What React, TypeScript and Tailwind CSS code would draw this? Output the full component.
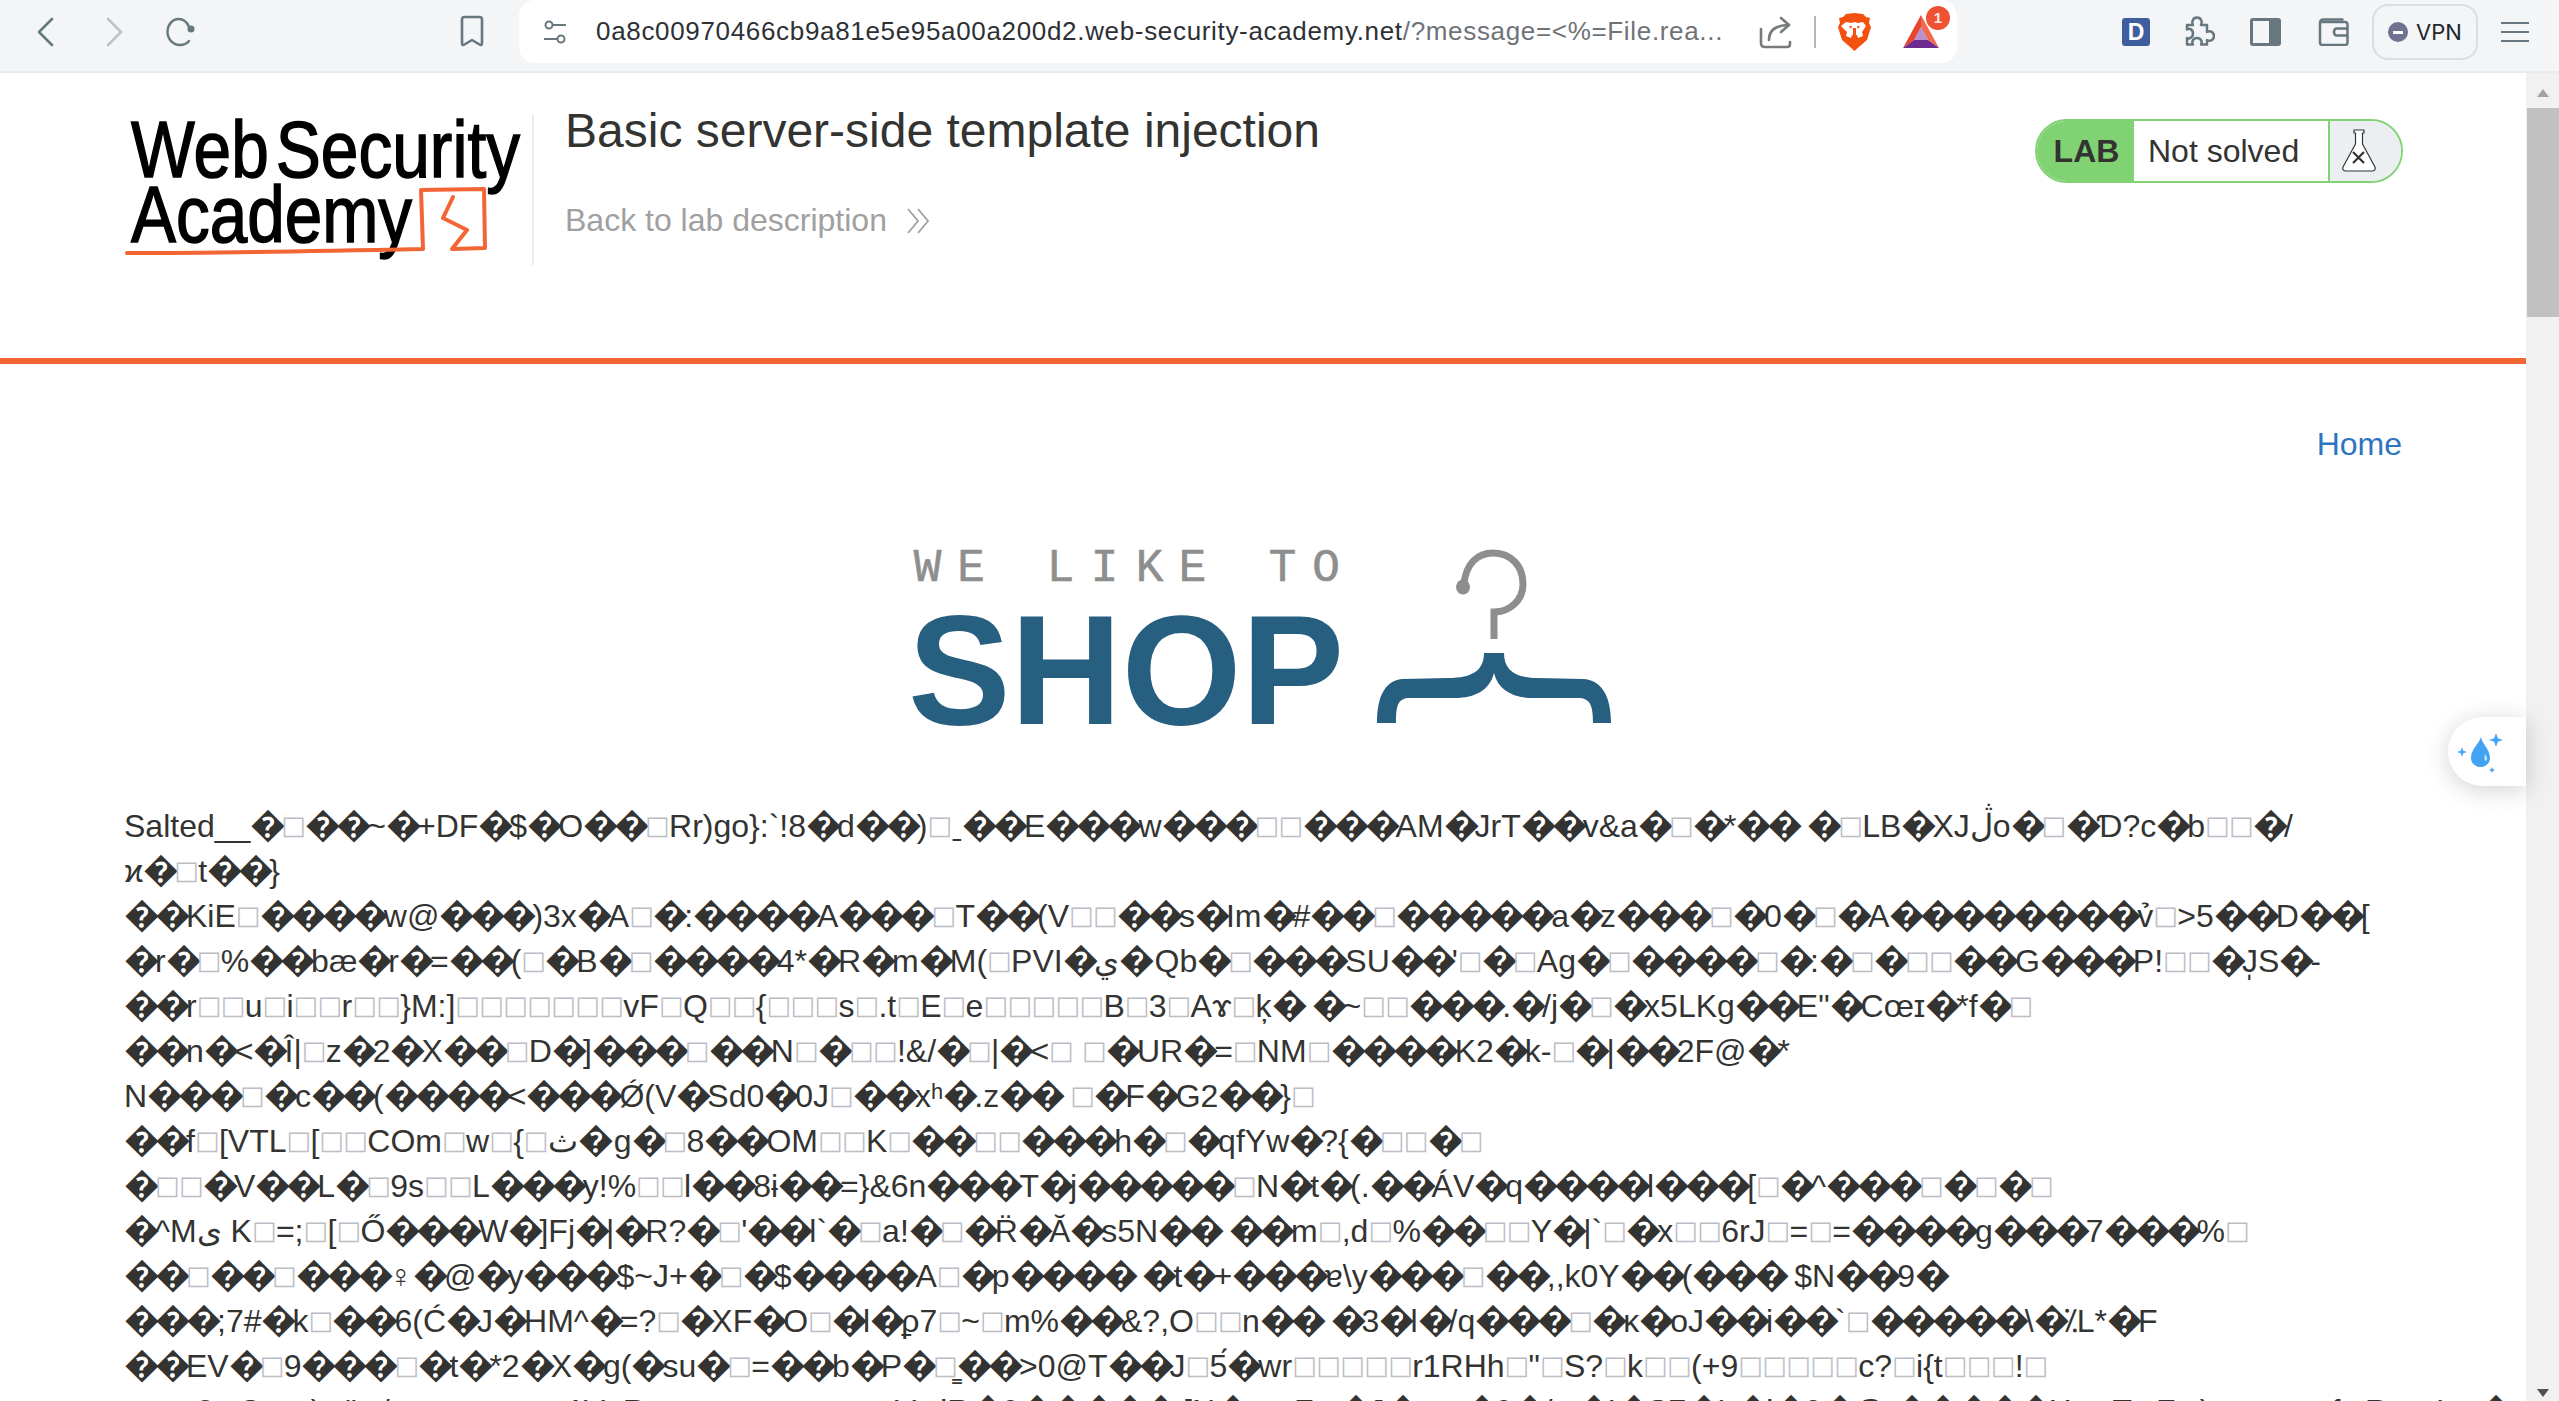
import React from 'react';

// Control bytes in the dumped file show up as pale empty boxes, replacement chars are big and tight
const DumpLine = ({ text }: { text: string }) => (
  <div className="h-[45px] whitespace-pre">
    {text.split(/(□|�+)/).map((part, i) =>
      part === '□' ? (
        <span key={i} className="inline-block w-[24px] text-center align-[3px] font-['DejaVu_Sans',sans-serif] text-[26px] leading-none text-[#bdbdc6]">
          □
        </span>
      ) : part.startsWith('�') ? (
        <span key={i} className="text-[36px] leading-none tracking-[-5px]">
          {part}
        </span>
      ) : (
        part
      ),
    )}
  </div>
);

const dumpedLines = [
  'Salted__�□��~�+DF�$�O��□Rr)go}:`!8�d��)□ˍ��E���w���□□���AM�JrT��v&a�□�*�� �□LB�XJڷo�□�Ɗ?c�b□□�/',
  'ϰ�□t��}',
  '��KiE□����w@���)3x�A□�:����A���□T��(V□□��s�Im�#��□�����a�z���□�0�□�A��������v̉□>5��D��[',
  '�r�□%��bæ�r�=��(□�B�□����4*�R�m�M(□PVI�ي�Qb�□���SU��\'□�□Ag�□����□�:�□�□□��G���P!□□�J̩S�-',
  '��r□□u□i□□r□□}M:]□□□□□□□vF□Q□□{□□□s□.t□E□e□□□□□B□3□Aɤ□ķ� �~□□���.�/j�□�x5LKg��E"�Cœɪ�*f�□',
  '��n�<�Î|□z�2�X��□D�]���□��N□�□□!&/�□|�<□ □�UR�=□NM□����K2�k-□�|��2F@�*',
  'N���□�c��(����<���Ǿ(V�Sd0�0J□��xʰ�.z�� □�F�G2��}□',
  '��f□[VTL□[□□COm□w□{□ث�g�□8��OM□□K□��□□���h�□�qfYw�?{�□□�□',
  '�□□�V��L�□9s□□L���y!%□□l��8ɨ��=}&6n���T�j�����□N�t�(.��ÁV�q����l���[□�^���□�□�□',
  '�^Mى K□=;□[□Ő���W�]Fj�|�R?�□\'��l`�□a!�□�R̈�Ă�s5N�� ��m□,d□%��□□Y�|`□�x□□6rJ□=□=����g���7���%□',
  '��□��□���♀�@�y���$~J+�□�$����A□�p���� �t�+���ɐ\\y���□��,,k0Y��(��� $N��9�',
  '���;7#�k□��6(Ć�J�HM^�=?□�XF�O□�l�ϼ7□~□m%��&?,O□□n�� �3�l�/q���□�κ�oJ��i��`□�����\\�⁒L*�F',
  '��EV�□9���□�t�*2�X�g(�su�□=��b�P�□̳��>0@T��J□5́�wr□□□□□r1RHh□"□S?□k□□(+9□□□□□c?□i{t□□□!□',
  '□□□?□O□□)□"□/□□□□□□□ AV_R□□□□□□□ □□□V□ʼR�0�����,[N�□□F□�J�□□�0�/□�!�S7�L�ʼ�0�@:�����X□_T□F□)□□□□□{□R□□L□�',
];

const iconStroke = '#66777f';

const Toolbar = () => (
  <div className="flex h-[73px] shrink-0 items-start border-b-2 border-[#e9ebee] bg-[#f3f5f7] pl-[31px]">
    <div className="flex h-[64px] items-center">
      <svg width="30" height="30" viewBox="0 0 30 30" fill="none" stroke={iconStroke} strokeWidth="2.6" strokeLinecap="round" strokeLinejoin="round">
        <path d="M21 2 8 15l13 13" />
      </svg>
      <svg className="ml-[38px]" width="30" height="30" viewBox="0 0 30 30" fill="none" stroke="#bcc5c9" strokeWidth="2.6" strokeLinecap="round" strokeLinejoin="round">
        <path d="M9 2l13 13L9 28" />
      </svg>
      <svg className="ml-[37px]" width="30" height="30" viewBox="0 0 30 30" fill="none" stroke={iconStroke} strokeWidth="2.4" strokeLinecap="round">
        <path d="M23 10C21 4 16 2 13 2 6 2 1.500 8 1.500 15 1.500 22 7 28 14 28c4 0 7-1.500 9-4" />
        <circle cx="25" cy="12" r="3.500" fill={iconStroke} stroke="none" />
      </svg>
      <svg className="ml-[261px]" width="30" height="34" viewBox="0 0 30 34" fill="none" stroke={iconStroke} strokeWidth="2.600" strokeLinejoin="round">
        <path d="M5 4.500Q5 2 7.500 2h15Q25 2 25 4.500V28q0 3-2.500 1.500L15 25l-7.500 4.500Q5 31 5 28Z" />
      </svg>
    </div>
    <div className="ml-[32px] flex h-[63px] w-[1438px] items-center rounded-[16px] bg-white pl-[24px] pr-[17px]">
      <svg width="24" height="24" viewBox="0 0 24 24" fill="none" stroke={iconStroke} strokeWidth="2">
        <circle cx="6" cy="5" r="3.500" />
        <path d="M10 5h13" />
        <circle cx="18" cy="19" r="3.500" />
        <path d="M1 19h13" />
      </svg>
      <span className="ml-[29px] font-['Liberation_Sans',sans-serif] text-[26px] tracking-[0.67px] whitespace-nowrap text-[#6e7378]">
        <span className="text-[#2d3135]">0a8c00970466cb9a81e5e95a00a200d2.web-security-academy.net</span>/?message=&lt;%=File.rea...
      </span>
      <svg className="ml-auto" width="34" height="34" viewBox="0 0 34 34" fill="none" stroke="#777b7e" strokeWidth="2.600" strokeLinecap="round" strokeLinejoin="round">
        <path d="M3 14v14q0 4 4 4h22q3 0 3-3v-2" />
        <path d="M11 25c0-9 6-15 20-15" />
        <path d="M23 3l8 7-8 7" />
      </svg>
      <div className="ml-[22px] h-[32px] w-[2px] bg-[#b5b8ba]" />
      <svg className="ml-[22px]" width="33" height="38" viewBox="0 0 33 38">
        <path fill="#f4500f" d="M16.500 0 25 1l3 3 4 1-1 5 2 4-4 13-7 6-5.500 5-5.500-5-7-6L0 14l2-4-1-5 4-1 3-3Z" />
        <path fill="#fff" d="M8 9l5 1 3.500-1L20 10l5-1 3 4-4 6 1 4-5 2-1-3h-5l-1 3-5-2 1-4-6-6Z" />
        <path fill="#f4500f" d="M11 13h3l-1 3ZM19 13h3l-2 3ZM15 15h3v8h-3ZM12 25l4.500 2 4.500-2-4.500 6Z" />
      </svg>
      <div className="relative ml-[32px]">
        <svg className="mt-[1px]" width="37" height="34" viewBox="0 0 37 34">
          <path fill="#e8452f" d="M18 0 0 33l11-8 7-13Z" />
          <path fill="#f26a4b" d="M18 0v12l7 13 11 8Z" />
          <path fill="#6d2b8f" d="M0 33h36l-11-8H11Z" />
          <path fill="#8a4aa8" d="M18 12l7 13H11Z" opacity="0.600" />
        </svg>
        <div className="absolute left-[23px] top-[-8px] flex h-[24px] w-[24px] items-center justify-center rounded-full bg-[#ef5134] font-['Liberation_Sans',sans-serif] text-[15px] font-bold text-[#ffe9e2]">
          1
        </div>
      </div>
    </div>
    <div className="flex h-[64px] items-center">
      <div className="ml-[165px] flex h-[28px] w-[28px] items-center justify-center rounded-[3px] bg-[#3f5e9e] font-['Liberation_Sans',sans-serif] text-[23px] font-bold text-white">
        D
      </div>
      <svg className="ml-[33px]" width="32" height="32" viewBox="0 0 32 32" fill="none" stroke={iconStroke} strokeWidth="2.500" strokeLinejoin="round">
        <path d="M4 9h6q-1-2-.5-4 1-3.500 4.500-3.500T18.500 5q.5 2-.5 4h6v7q2-1 4-.5 3 1 3 4.500t-3 4.500q-2 .5-4-.5v4.500H18q1-2 .5-3.500-1-3-4.500-3t-4.500 3q-.5 1.500.5 3.500H4v-6.500q2 1 3 0 3-1 3-4.500T7 13q-1-.5-3 .5Z" />
      </svg>
      <svg className="ml-[35px]" width="31" height="28" viewBox="0 0 31 28">
        <path fill={iconStroke} d="M3 0h25q3 0 3 3v22q0 3-3 3H3q-3 0-3-3V3q0-3 3-3Zm0 3v22h16V3Z" />
      </svg>
      <svg className="ml-[37px]" width="31" height="28" viewBox="0 0 31 28" fill="none" stroke={iconStroke} strokeWidth="2.500" strokeLinejoin="round">
        <path d="M2 5q0-3.500 3.500-3.500h20" />
        <path d="M2 5q0-1 2-1h23q2.500 0 2.500 2.500v18q0 2.500-2.500 2.500H4.500Q2 27 2 24.500Z" />
        <path d="M29.500 10.500H19q-3 0-3 3.500t3 3.500h10.500" />
      </svg>
      <div className="ml-[23px] flex h-[56px] w-[106px] items-center rounded-[16px] border-2 border-[#d6dfe5] pl-[14px]">
        <div className="flex h-[20px] w-[20px] items-center justify-center rounded-full bg-[#6f7290]">
          <div className="h-[3px] w-[10px] bg-white" />
        </div>
        <span className="ml-[8px] font-['Inter',sans-serif] text-[22px] text-[#20262b]">VPN</span>
      </div>
      <div className="ml-[23px] flex w-[28px] flex-col gap-[7px]">
        <div className="h-[2px] bg-[#66777f]" />
        <div className="h-[2px] bg-[#66777f]" />
        <div className="h-[2px] bg-[#66777f]" />
      </div>
    </div>
  </div>
);

const AcademyLogo = () => (
  <svg width="408" height="150" viewBox="124 115 408 150" className="shrink-0">
    <g fontFamily="'Liberation Sans',sans-serif" fill="#000" stroke="#000" strokeWidth="1.500">
      <text x="131" y="177" fontSize="80" wordSpacing="-14" textLength="389" lengthAdjust="spacingAndGlyphs">
        Web Security
      </text>
      <text x="131" y="242" fontSize="80" textLength="281" lengthAdjust="spacingAndGlyphs">
        Academy
      </text>
    </g>
    <path
      fill="none"
      stroke="#f26534"
      strokeWidth="4"
      strokeLinejoin="round"
      strokeLinecap="round"
      d="M127 253q100 0 296-4l-2-59 63-1 1 59-33 1 15-19-14-7-10-5 10-21"
    />
  </svg>
);

const LabStatus = () => (
  <div className="flex h-[64px] w-[368px] overflow-hidden rounded-[32px] border-2 border-[#80d273] font-['Liberation_Sans',sans-serif] text-[32px] text-[#333332]">
    <div className="flex w-[97px] items-center justify-center bg-[#80d273] pl-[2px] font-bold">LAB</div>
    <div className="flex w-[196px] items-center border-r-2 border-[#80d273] bg-white pl-[14px]">Not solved</div>
    <div className="flex flex-1 items-center bg-[#ebeff2] pl-[11px]">
      <svg width="36" height="44" viewBox="0 0 36 44" fill="#fff" stroke="#333332" strokeWidth="1.200" strokeLinejoin="round">
        <path d="M13 1h10v3h-1.500v11L34 38q1 4-3 4H5q-4 0-3-4L14.500 15V4H13Z" />
        <path d="M12 23l11 11M23 23 12 34" fill="none" strokeWidth="2.200" />
      </svg>
    </div>
  </div>
);

const Header = () => (
  <div className="flex h-[291px] shrink-0 border-b-[6px] border-[#f26534] bg-white pl-[124px] pr-[123px] pt-[42px]">
    <div className="h-[150px] border-r-2 border-[#e8eaec]">
      <AcademyLogo />
    </div>
    <div className="ml-[31px] flex-1 font-['Liberation_Sans',sans-serif]">
      <h2 className="mt-[-16px] text-[48px] leading-[64px] text-[#333332]">Basic server-side template injection</h2>
      <div className="mt-[35px] flex items-center text-[32px] leading-[45px] text-[#a0a0a0]">
        Back to lab description
        <svg className="ml-[19px]" width="24" height="26" viewBox="0 0 24 26" fill="none" stroke="#a0a0a0" strokeWidth="1.800">
          <path d="M2 1l10 12L2 25M12 1l10 12-10 12" />
        </svg>
      </div>
    </div>
    <div className="mt-[4px]">
      <LabStatus />
    </div>
  </div>
);

const ShopLogo = () => (
  <svg width="710" height="185" viewBox="910 545 710 185">
    <text
      x="929.500 973 1017 1062.500 1106.500 1151.500 1194.500 1240 1284.500 1328"
      y="581"
      textAnchor="middle"
      fontFamily="'Liberation Mono',monospace"
      fontSize="46"
      fill="#8e8e8e"
      stroke="#8e8e8e"
      strokeWidth="0.600"
    >
      WE LIKE TO
    </text>
    <text x="910" y="724" fontFamily="'Liberation Sans',sans-serif" fontWeight="700" fontSize="156" fill="#275f80" textLength="436" lengthAdjust="spacingAndGlyphs">
      SHOP
    </text>
    <path fill="none" stroke="#8e8e8e" strokeWidth="7" d="M1466 584C1468 563 1480 553 1495 553 1514 553 1525 567 1525 584 1525 600 1512 612 1496 612V639" />
    <ellipse cx="1465" cy="587" rx="7" ry="7.500" fill="#8e8e8e" />
    <path
      fill="#275f80"
      d="M1379 723C1379 695 1388 680 1405 679L1450 678C1475 678 1486 670 1486 653H1506C1506 670 1517 678 1540 678L1585 679C1603 680 1613 695 1613 723H1595C1595 705 1592 698 1580 698H1535C1515 698 1500 690 1496 673 1492 690 1477 698 1457 698H1412C1400 698 1398 705 1398 723Z"
    />
  </svg>
);

// The little drop button docked on the right edge of the page
const FloatingDrop = () => (
  <div className="pointer-events-none absolute right-[33px] top-[644px] z-10 flex h-[69px] w-[78px] items-center rounded-l-[35px] bg-white pl-[8px] shadow-[0_4px_24px_rgba(0,0,0,0.18)]">
    <svg width="48" height="48" viewBox="0 0 48 48" fill="#43a3f3">
      <path d="M25 9c-2 7-10 12-10 21 0 5 4 9 9.500 9S34 35 34 30c0-9-8-14-9-21Z" />
      <path fill="#cfe6fb" d="M29 26q2 2 2 6l-2 1q-1-4 0-7Z" />
      <path d="M40 5l1.800 5.200L47 12l-5.200 1.800L40 19l-1.800-5.200L33 12l5.200-1.800ZM6 19l1.200 3.800L11 24l-3.800 1.200L6 29l-1.200-3.800L1 24l3.800-1.200ZM36 39l.9 2.100L39 42l-2.100.9L36 45l-.9-2.100L33 42l2.100-.9Z" />
    </svg>
  </div>
);

const Scrollbar = () => (
  <div className="flex w-[33px] shrink-0 flex-col items-center bg-[#f1f1f1]">
    <svg className="mt-[14px]" width="16" height="12" viewBox="0 0 16 12" fill="#a3a3a3">
      <path d="M8 2l6 8H2Z" />
    </svg>
    <div className="mt-[9px] h-[209px] w-[32px] bg-[#c1c1c1]" />
    <svg className="mt-auto mb-[2px]" width="16" height="12" viewBox="0 0 16 12" fill="#505050">
      <path d="M8 10 2 2h12Z" />
    </svg>
  </div>
);

export default function App() {
  return (
    <div className="flex h-screen flex-col overflow-hidden bg-white">
      <Toolbar />
      <div className="relative flex min-h-0 flex-1">
        <div className="min-w-0 flex-1 overflow-hidden">
          <Header />
          <div className="px-[124px] font-['Liberation_Sans',sans-serif] text-[32px] leading-[45px] text-[#333332]">
            <div className="pt-[58px] text-right">
              <a className="text-[#2f74c0]">Home</a>
            </div>
            <div className="mt-[78px] flex justify-center">
              <ShopLogo />
            </div>
            <div className="mt-[74px]">
              {dumpedLines.map((line, i) => (
                <DumpLine key={i} text={line} />
              ))}
            </div>
          </div>
        </div>
        <Scrollbar />
        <FloatingDrop />
      </div>
    </div>
  );
}
